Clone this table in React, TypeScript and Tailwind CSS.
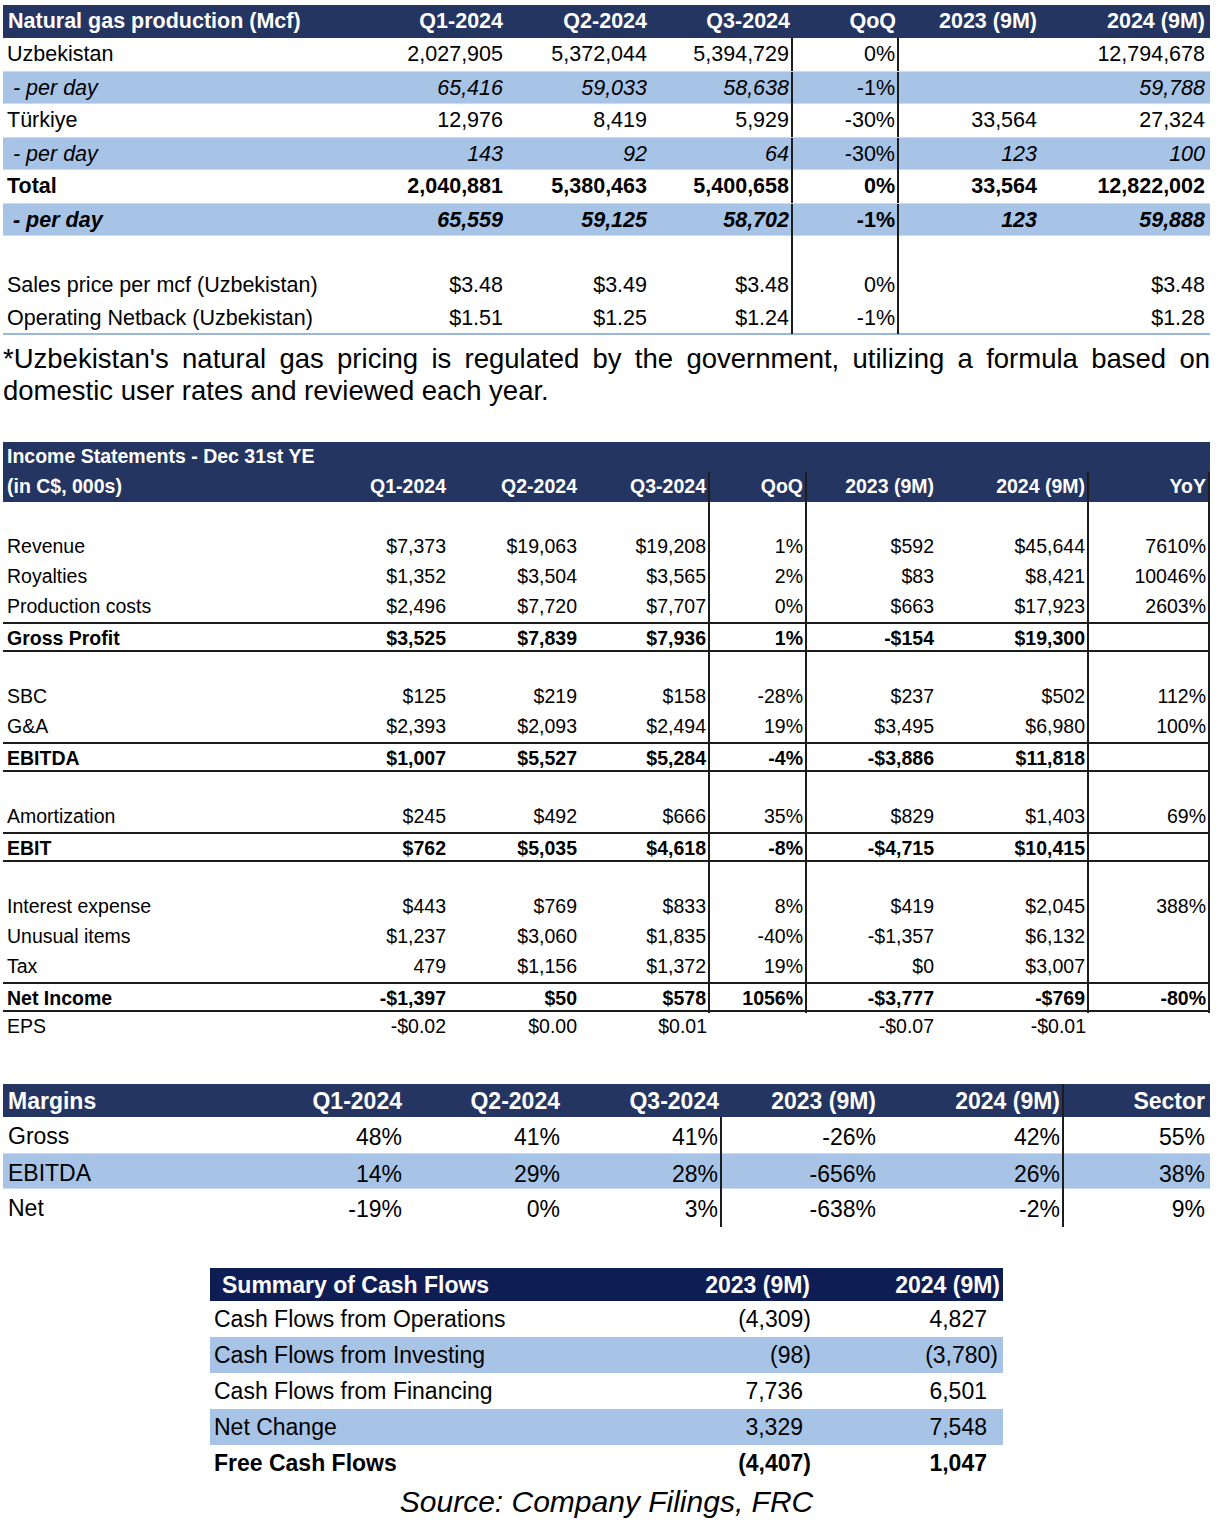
import React from "react"

type Kind = "plain" | "italic" | "bold" | "boldItalic" | "blank"

interface GasRow {
  label: string
  vals: string[]
  kind: Kind
  blue?: boolean
}

const gasRows: GasRow[] = [
  { label: "Uzbekistan", vals: ["2,027,905", "5,372,044", "5,394,729", "0%", "", "12,794,678"], kind: "plain" },
  { label: " - per day", vals: ["65,416", "59,033", "58,638", "-1%", "", "59,788"], kind: "italic", blue: true },
  { label: "Türkiye", vals: ["12,976", "8,419", "5,929", "-30%", "33,564", "27,324"], kind: "plain" },
  { label: " - per day", vals: ["143", "92", "64", "-30%", "123", "100"], kind: "italic", blue: true },
  { label: "Total", vals: ["2,040,881", "5,380,463", "5,400,658", "0%", "33,564", "12,822,002"], kind: "bold" },
  { label: " - per day", vals: ["65,559", "59,125", "58,702", "-1%", "123", "59,888"], kind: "boldItalic", blue: true },
  { label: "", vals: ["", "", "", "", "", ""], kind: "blank" },
  { label: "Sales price per mcf (Uzbekistan)", vals: ["$3.48", "$3.49", "$3.48", "0%", "", "$3.48"], kind: "plain" },
  { label: "Operating Netback (Uzbekistan)", vals: ["$1.51", "$1.25", "$1.24", "-1%", "", "$1.28"], kind: "plain" },
]

interface IncRow {
  label: string
  vals: string[]
  bold?: boolean
  eps?: boolean
}

const blank8 = ["", "", "", "", "", "", ""]

const incomeRows: IncRow[] = [
  { label: "", vals: blank8 },
  { label: "Revenue", vals: ["$7,373", "$19,063", "$19,208", "1%", "$592", "$45,644", "7610%"] },
  { label: "Royalties", vals: ["$1,352", "$3,504", "$3,565", "2%", "$83", "$8,421", "10046%"] },
  { label: "Production costs", vals: ["$2,496", "$7,720", "$7,707", "0%", "$663", "$17,923", "2603%"] },
  { label: "Gross Profit", vals: ["$3,525", "$7,839", "$7,936", "1%", "-$154", "$19,300", ""], bold: true },
  { label: "", vals: blank8 },
  { label: "SBC", vals: ["$125", "$219", "$158", "-28%", "$237", "$502", "112%"] },
  { label: "G&A", vals: ["$2,393", "$2,093", "$2,494", "19%", "$3,495", "$6,980", "100%"] },
  { label: "EBITDA", vals: ["$1,007", "$5,527", "$5,284", "-4%", "-$3,886", "$11,818", ""], bold: true },
  { label: "", vals: blank8 },
  { label: "Amortization", vals: ["$245", "$492", "$666", "35%", "$829", "$1,403", "69%"] },
  { label: "EBIT", vals: ["$762", "$5,035", "$4,618", "-8%", "-$4,715", "$10,415", ""], bold: true },
  { label: "", vals: blank8 },
  { label: "Interest expense", vals: ["$443", "$769", "$833", "8%", "$419", "$2,045", "388%"] },
  { label: "Unusual items", vals: ["$1,237", "$3,060", "$1,835", "-40%", "-$1,357", "$6,132", ""] },
  { label: "Tax", vals: ["479", "$1,156", "$1,372", "19%", "$0", "$3,007", ""] },
  { label: "Net Income", vals: ["-$1,397", "$50", "$578", "1056%", "-$3,777", "-$769", "-80%"], bold: true },
  { label: "EPS", vals: ["-$0.02", "$0.00", "$0.01", "", "-$0.07", "-$0.01", ""], eps: true },
]

const marginRows = [
  { label: "Gross", vals: ["48%", "41%", "41%", "-26%", "42%", "55%"], blue: false },
  { label: "EBITDA", vals: ["14%", "29%", "28%", "-656%", "26%", "38%"], blue: true },
  { label: "Net", vals: ["-19%", "0%", "3%", "-638%", "-2%", "9%"], blue: false },
]

const cashRows = [
  { label: "Cash Flows from Operations", a: "(4,309)", b: "4,827", blue: false, bold: false },
  { label: "Cash Flows from Investing", a: "(98)", b: "(3,780)", blue: true, bold: false },
  { label: "Cash Flows from Financing", a: "7,736", b: "6,501", blue: false, bold: false },
  { label: "Net Change", a: "3,329", b: "7,548", blue: true, bold: false },
  { label: "Free Cash Flows", a: "(4,407)", b: "1,047", blue: false, bold: true },
]

const gasCols = "grid grid-cols-[357px_146px_144px_143px_106px_141px_170px]"
const incCols = "grid grid-cols-[317px_129px_131px_130px_97px_130px_152px_121px]"
const marCols = "grid grid-cols-[242px_160px_158px_159px_157px_185px_146px]"

function isBold(kind: Kind) {
  return kind === "bold" || kind === "boldItalic"
}

function isItalic(kind: Kind) {
  return kind === "italic" || kind === "boldItalic"
}

function GasTable() {
  const heads = ["Q1-2024", "Q2-2024", "Q3-2024", "QoQ", "2023 (9M)", "2024 (9M)"]
  return (
    <div className="text-[21.5px]">
      <div className={`${gasCols} h-[33px] bg-[#253561] font-bold text-white`}>
        <div className="flex items-center pl-[5px]">Natural gas production (Mcf)</div>
        {heads.map((h, i) => (
          <div key={h} className={`flex items-center justify-end ${i === 5 ? "pr-[5px]" : "pr-[3px]"}`}>
            {h}
          </div>
        ))}
      </div>
      {gasRows.map((r, idx) => (
        <div
          key={idx}
          className={`${gasCols} h-[33px] ${isBold(r.kind) ? "font-bold" : ""} ${
            r.blue ? "bg-[#a7c3e5] border-y border-[#cbdbef]" : ""
          } ${idx === gasRows.length - 1 ? "border-b-2 border-[#9ab8de]" : ""}`}
        >
          <div className={`flex items-center whitespace-pre pl-[4px] ${isItalic(r.kind) ? "italic" : ""}`}>
            {r.label}
          </div>
          {r.vals.map((v, i) => (
            <div
              key={i}
              className={`flex items-center justify-end ${isItalic(r.kind) && i !== 3 ? "italic" : ""} ${
                i === 2 || i === 3 ? "border-r-2 border-[#1c1c1c] pr-[2px]" : i === 5 ? "pr-[5px]" : "pr-[3px]"
              }`}
            >
              {v}
            </div>
          ))}
        </div>
      ))}
    </div>
  )
}

function IncomeTable() {
  const heads = ["Q1-2024", "Q2-2024", "Q3-2024", "QoQ", "2023 (9M)", "2024 (9M)", "YoY"]
  const lined = (i: number) => i === 2 || i === 3 || i === 5 || i === 6
  return (
    <div className="text-[19.5px]">
      <div className="bg-[#253561] font-bold text-white">
        <div className="flex h-[30px] items-center pl-[4px]">Income Statements - Dec 31st YE</div>
        <div className={`${incCols} h-[30px]`}>
          <div className="flex items-center pl-[4px]">(in C$, 000s)</div>
          {heads.map((h, i) => (
            <div
              key={h}
              className={`flex items-center justify-end ${
                lined(i) ? "border-r-2 border-[#1c1c1c] pr-[2px]" : "pr-[3px]"
              }`}
            >
              {h}
            </div>
          ))}
        </div>
      </div>
      {incomeRows.map((r, idx) => (
        <div
          key={idx}
          className={`${incCols} h-[30px] ${r.bold ? "border-y-2 border-[#1c1c1c] font-bold" : ""}`}
        >
          <div className="flex items-center pl-[4px]">{r.label}</div>
          {r.vals.map((v, i) => (
            <div
              key={i}
              className={`flex items-center justify-end ${
                lined(i) && !r.eps ? "border-r-2 border-[#1c1c1c] pr-[2px]" : "pr-[3px]"
              }`}
            >
              {v}
            </div>
          ))}
        </div>
      ))}
    </div>
  )
}

function MarginTable() {
  const heads = ["Q1-2024", "Q2-2024", "Q3-2024", "2023 (9M)", "2024 (9M)", "Sector"]
  return (
    <div className="text-[23px]">
      <div className={`${marCols} h-[33px] bg-[#253561] font-bold text-white`}>
        <div className="flex items-center pl-[5px]">Margins</div>
        {heads.map((h, i) => (
          <div
            key={h}
            className={`flex items-center justify-end ${
              i === 4 ? "border-r-2 border-[#1c1c1c] pr-[2px]" : i === 5 ? "pr-[5px]" : "pr-[3px]"
            }`}
          >
            {h}
          </div>
        ))}
      </div>
      {marginRows.map((r) => (
        <div
          key={r.label}
          className={`${marCols} h-[36px] ${r.blue ? "bg-[#a7c3e5] border-y border-[#cbdbef]" : ""}`}
        >
          <div className="flex items-center pl-[5px]">{r.label}</div>
          {r.vals.map((v, i) => (
            <div
              key={i}
              className={`flex items-center justify-end pt-[3px] ${
                i === 2 || i === 4 ? "border-r-2 border-[#1c1c1c] pr-[2px]" : i === 5 ? "pr-[5px]" : "pr-[3px]"
              }`}
            >
              {v}
            </div>
          ))}
        </div>
      ))}
    </div>
  )
}

function CashTable() {
  const neg = (v: string) => v.startsWith("(")
  return (
    <div className="mx-auto w-[793px] text-[23px]">
      <div className="grid h-[33px] grid-cols-[430px_177px_186px] bg-[#0f1d55] font-bold text-white">
        <div className="flex items-center pl-[12px]">Summary of Cash Flows</div>
        <div className="flex items-center justify-end pr-[7px]">2023 (9M)</div>
        <div className="flex items-center justify-end pr-[3px]">2024 (9M)</div>
      </div>
      {cashRows.map((r) => (
        <div
          key={r.label}
          className={`grid h-[36px] grid-cols-[430px_177px_186px] ${r.blue ? "bg-[#a7c3e5]" : ""} ${
            r.bold ? "font-bold" : ""
          }`}
        >
          <div className="flex items-center pl-[4px]">{r.label}</div>
          <div className={`flex items-center justify-end ${neg(r.a) ? "pr-[6px]" : "pr-[14px]"}`}>{r.a}</div>
          <div className={`flex items-center justify-end ${neg(r.b) ? "pr-[5px]" : "pr-[16px]"}`}>{r.b}</div>
        </div>
      ))}
    </div>
  )
}

export default function App() {
  return (
    <div className="min-h-[1530px] bg-white font-['Liberation_Sans',Arial,sans-serif] text-black">
      <div className="ml-[3px] w-[1207px] pt-[5px]">
        <GasTable />

        <p className="mt-[8px] text-justify text-[27.5px] leading-[32px]">
          *Uzbekistan's natural gas pricing is regulated by the government, utilizing a formula based on
          domestic user rates and reviewed each year.
        </p>

        <div className="mt-[35px]">
          <IncomeTable />
        </div>

        <div className="mt-[42px]">
          <MarginTable />
        </div>

        <div className="mt-[43px]">
          <CashTable />
        </div>

        <p className="mt-[4px] text-center text-[30px] italic leading-[34px]">Source: Company Filings, FRC</p>
      </div>
    </div>
  )
}
